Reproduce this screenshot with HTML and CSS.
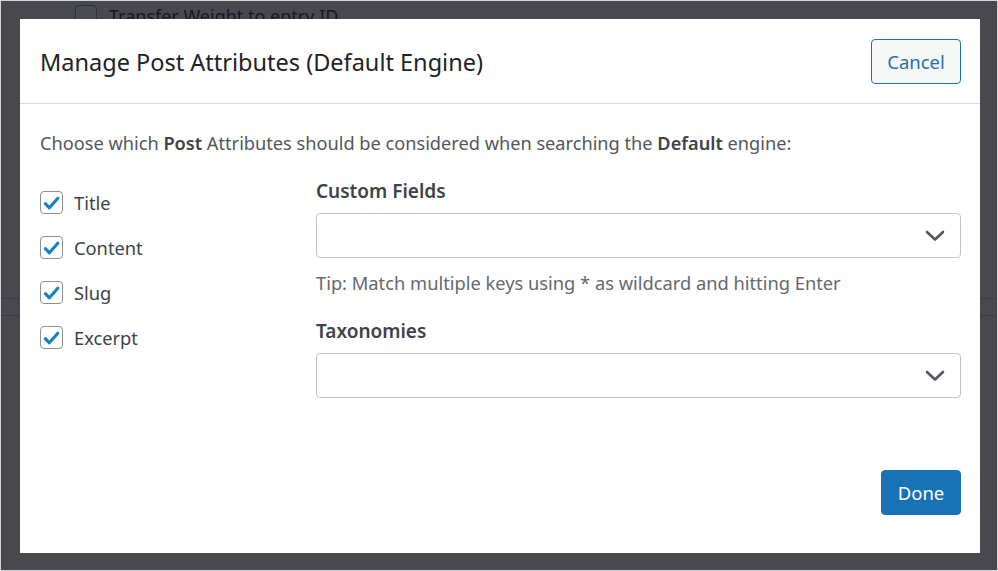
FILE: index.html
```html
<!DOCTYPE html>
<html>
<head>
<meta charset="utf-8">
<link rel="stylesheet" href="styles.css">
</head>
<body>
<div class="page">
  <div class="bg-row">
    <span class="bg-check"></span>
    <span class="bg-label">Transfer Weight to entry ID</span>
  </div>
  <div class="bg-band"></div>
</div>
<div class="overlay"></div>
<div class="modal">
  <div class="modal-header">
    <h2 class="modal-title">Manage Post Attributes (Default Engine)</h2>
    <button class="btn btn-secondary">Cancel</button>
  </div>
  <div class="modal-body">
    <p class="intro">Choose which <strong>Post</strong> Attributes should be considered when searching the <strong>Default</strong> engine:</p>
    <div class="columns">
      <ul class="attr-list">
        <li class="attr"><span class="cb"><svg viewBox="0 0 24 24" width="22" height="22"><path d="M5 12.8l4.6 4.7L19.2 6.5" fill="none" stroke="#1a80c6" stroke-width="3.6" stroke-linecap="round" stroke-linejoin="round"/></svg></span>Title</li>
        <li class="attr"><span class="cb"><svg viewBox="0 0 24 24" width="22" height="22"><path d="M5 12.8l4.6 4.7L19.2 6.5" fill="none" stroke="#1a80c6" stroke-width="3.6" stroke-linecap="round" stroke-linejoin="round"/></svg></span>Content</li>
        <li class="attr"><span class="cb"><svg viewBox="0 0 24 24" width="22" height="22"><path d="M5 12.8l4.6 4.7L19.2 6.5" fill="none" stroke="#1a80c6" stroke-width="3.6" stroke-linecap="round" stroke-linejoin="round"/></svg></span>Slug</li>
        <li class="attr"><span class="cb"><svg viewBox="0 0 24 24" width="22" height="22"><path d="M5 12.8l4.6 4.7L19.2 6.5" fill="none" stroke="#1a80c6" stroke-width="3.6" stroke-linecap="round" stroke-linejoin="round"/></svg></span>Excerpt</li>
      </ul>
      <div class="fields">
        <div class="field">
          <div class="field-label">Custom Fields</div>
          <div class="select"><svg viewBox="0 0 20 12" width="20" height="12"><path d="M2 2l8 7.5L18 2" fill="none" stroke="#50575e" stroke-width="2.6" stroke-linecap="round" stroke-linejoin="round"/></svg></div>
          <div class="tip">Tip: Match multiple keys using * as wildcard and hitting Enter</div>
        </div>
        <div class="field">
          <div class="field-label">Taxonomies</div>
          <div class="select"><svg viewBox="0 0 20 12" width="20" height="12"><path d="M2 2l8 7.5L18 2" fill="none" stroke="#50575e" stroke-width="2.6" stroke-linecap="round" stroke-linejoin="round"/></svg></div>
        </div>
      </div>
    </div>
  </div>
  <div class="modal-footer">
    <button class="btn btn-primary">Done</button>
  </div>
</div>
</body>
</html>
```
FILE: styles.css
```css
* { box-sizing: border-box; }
html, body { margin: 0; padding: 0; }
body {
  width: 998px;
  height: 571px;
  overflow: hidden;
  position: relative;
  background: #f0f0f1;
  font-family: "Noto Sans", "Open Sans", sans-serif;
  border: 1px solid #d4d4d6;
}
.page { padding: 3px 0 0 74px; }
.bg-row { display: flex; align-items: center; gap: 12px; height: 24px; }
.bg-check {
  width: 22px; height: 22px; border: 1px solid #8c8f94; border-radius: 4px; background: #fff;
}
.bg-label { font-size: 18px; color: #1d2327; }
.bg-band {
  margin: 270px 0 0 -74px;
  height: 18px;
  border-top: 1px solid #c3c4c7;
  border-bottom: 1px solid #c3c4c7;
}
.overlay {
  position: absolute; inset: 0;
  background: rgba(20, 22, 30, 0.77);
}
.modal {
  position: absolute;
  left: 19px; top: 18px;
  width: 960px; height: 534px;
  background: #fff;
  display: flex; flex-direction: column;
}
.modal-header {
  height: 85px;
  display: flex; align-items: center; justify-content: space-between;
  padding: 0 19px 0 20px;
  border-bottom: 1px solid #dcdcde;
}
.modal-title {
  margin: 2px 0 0; font-size: 23.5px; font-weight: 400; color: #1d2327;
}
.btn {
  font-family: inherit; font-size: 18.5px; border-radius: 4px; cursor: pointer;
  height: 45px; padding: 0;
}
.btn-secondary {
  width: 90px;
  background: #f6f7f7; color: #2271b1; border: 1px solid #2271b1;
}
.btn-primary {
  width: 80px;
  background: #1972b5; color: #fff; border: 1px solid #1972b5;
}
.modal-body { padding: 25px 19px 0 20px; flex: 1; }
.intro { margin: 0; font-size: 18.2px; color: #50575e; line-height: 28px; }
.intro strong { color: #3c434a; font-weight: 600; }
.columns { display: flex; margin-top: 22px; }
.attr-list { list-style: none; margin: 1px 0 0; padding: 0; width: 276px; }
.attr {
  display: flex; align-items: center; gap: 11px;
  height: 45px; font-size: 18.3px; color: #3c434a;
}
.cb {
  width: 23px; height: 23px; border: 1px solid #8c8f94; border-radius: 4px;
  display: flex; align-items: center; justify-content: center;
}
.fields { flex: 1; }
.field-label { font-size: 19px; font-weight: 600; color: #3c434a; line-height: 24px; margin-bottom: 10px; }
.select {
  height: 45px; border: 1px solid #c3c4c7; border-radius: 4px;
  display: flex; align-items: center; justify-content: flex-end; padding-right: 15px;
}
.tip { font-size: 18.3px; color: #646970; margin-top: 13px; line-height: 24px; margin-bottom: 24px; }
.modal-footer { display: flex; justify-content: flex-end; padding: 0 19px 38px; }
```
